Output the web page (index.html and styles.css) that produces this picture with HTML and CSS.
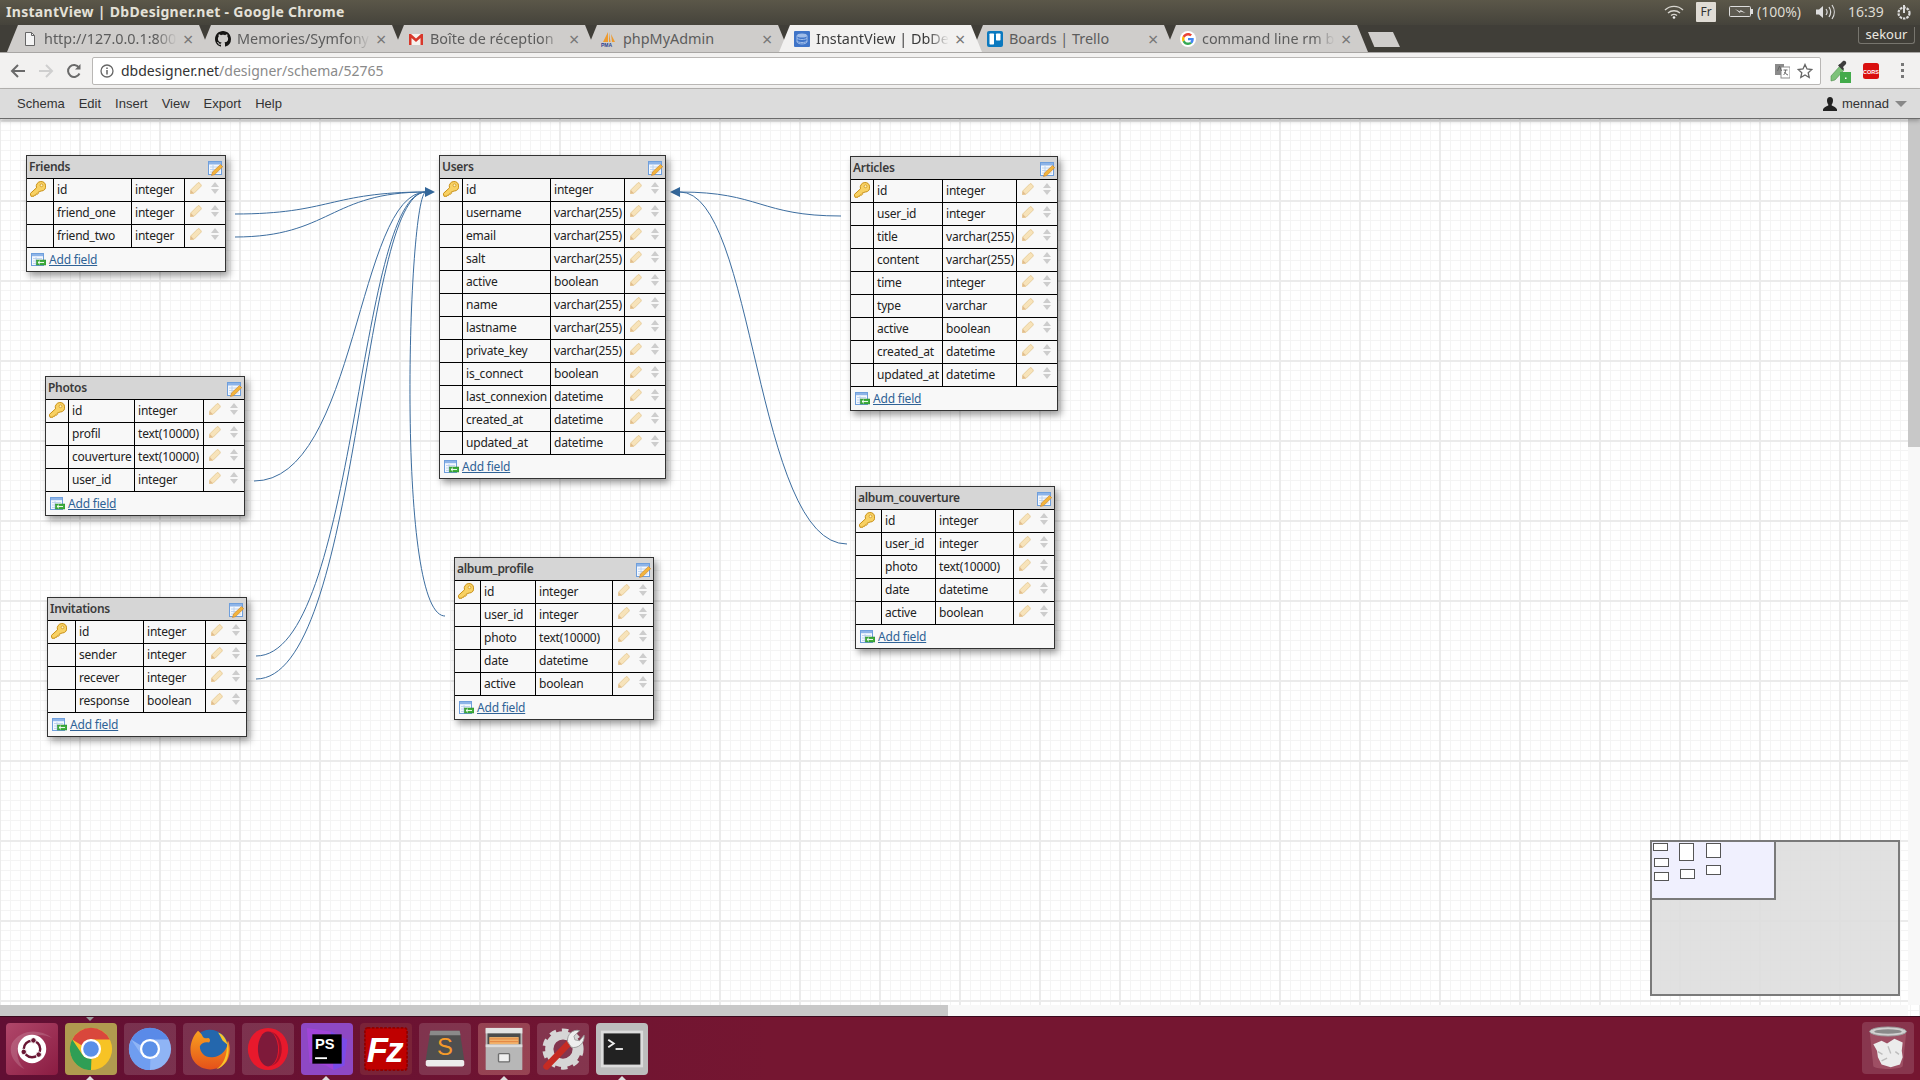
FILE: index.html
```html
<!DOCTYPE html>
<html>
<head>
  <title>InstantView | DbDesigner.net</title>
  <link rel="stylesheet" href="styles.css">
</head>
<body>

  <svg class="sprite">
    <symbol id="key" viewBox="0 0 16 16">
      <path d="M10.8.5a4.8 4.8 0 0 1 1 9.500L11 9.800 9.800 10.800 9 10.300l-.8.9.4 1-1.300 1-.9-.4-.6 1.400-1.400.1-.4.9-3 .1-.7-2.800 6.200-5.700A4.800 4.800 0 0 1 10.800.5z" fill="#f8d163" stroke="#c88f14"/>
      <circle cx="11.500" cy="4.300" r="1.400" fill="#fff3c4" stroke="#c88f14" stroke-width=".7"/>
    </symbol>
    <symbol id="pencil" viewBox="0 0 12 12">
      <path d="M.7 8 8 .7c1-.6 3.500 1.800 3.300 3.300L4 11.300.3 11.700z" fill="#f7e3ba" stroke="#e4c68f" stroke-width=".8"/>
      <path d="M1 8.300 3.700 11 .4 11.600z" fill="#e2bc8d"/>
    </symbol>
    <symbol id="sort" viewBox="0 0 8 12">
      <path d="M4 0 8 5H0zM4 12 0 7h8z" fill="#cdcdcd"/>
    </symbol>
    <symbol id="edit-table" viewBox="0 0 15 15">
      <rect x=".5" y=".5" width="13" height="13" fill="#f4f8fe" stroke="#6f9fdc"/>
      <rect x="1" y="1" width="12" height="2.500" fill="#8db4e8"/>
      <path d="M2 6h10M2 8.500h10M2 11h10M5 4v9" stroke="#b5cdec" stroke-width=".8"/>
      <path d="M4.500 11 12.500 3.500l2.200 2.200-8 7.800-3.200 1z" fill="#f3b43c" stroke="#c9822a" stroke-width=".6"/>
    </symbol>
    <symbol id="add-table" viewBox="0 0 15 13">
      <rect x=".5" y=".5" width="12" height="12" fill="#f4f8fe" stroke="#6f9fdc"/>
      <rect x="1" y="1" width="11" height="2.200" fill="#8db4e8"/>
      <path d="M2 5.500h9M2 8h9M2 10.500h9M5 4v8" stroke="#b5cdec" stroke-width=".8"/>
      <rect x="5.500" y="7" width="9.500" height="5" fill="#3fae3c" stroke="#23802a" stroke-width=".5"/>
      <path d="M7 9.500h6M7 9.500l2-1.800M7 9.500l2 1.800" stroke="#fff" stroke-width=".9" fill="none"/>
    </symbol>
    <linearGradient id="fox" x1="0" y1="0" x2="0" y2="1">
      <stop offset="0" stop-color="#f9a11f"/>
      <stop offset="1" stop-color="#e5511a"/>
    </linearGradient>
  </svg>

  <header class="panel">
    <div class="window-title">InstantView | DbDesigner.net - Google Chrome</div>
    <div class="indicators">
      <svg class="wifi" viewBox="0 0 20 14"><path d="M1 5a13 13 0 0 1 18 0M4 8a9 9 0 0 1 12 0M7 10.500a5 5 0 0 1 6 0" fill="none" stroke="#d8d6d0" stroke-width="1.400"/><circle cx="10" cy="12.500" r="1.300" fill="#eee"/></svg>
      <span class="lang">Fr</span>
      <svg class="battery" viewBox="0 0 24 11"><rect x=".5" y=".5" width="21" height="10" rx="1" fill="#5d5a50" stroke="#ddd"/><rect x="22" y="3" width="2" height="5" fill="#ddd"/><path d="M6 3l5 2.500.5-1.500 5 3-5-1.500-.5 1.500z" fill="#eee"/></svg>
      <span class="percent">(100%)</span>
      <svg class="volume" viewBox="0 0 20 16"><path d="M1 5.500h3L8 2v12L4 10.500H1z" fill="#ddd"/><path d="M11 5a5 5 0 0 1 0 6M14 3a9 9 0 0 1 0 10M17 1a12 12 0 0 1 0 14" fill="none" stroke="#ddd" stroke-width="1.200"/></svg>
      <span class="clock">16:39</span>
      <svg class="power" viewBox="0 0 18 18"><circle cx="9" cy="10" r="5.500" fill="none" stroke="#ddd" stroke-width="2.200" stroke-dasharray="2.500 1"/><path d="M9 2v8" stroke="#ddd" stroke-width="2"/></svg>
    </div>
  </header>

  <nav class="tabstrip">
    <div class="tab">
      <svg class="favicon" viewBox="0 0 16 16"><path d="M3.500 1.500h6l3 3v10h-9z" fill="#f4f4f4" stroke="#666"/><path d="M9.500 1.500v3h3" fill="none" stroke="#666"/></svg>
      <span class="tab-text">http://127.0.0.1:800</span><span class="close">×</span>
    </div>
    <div class="tab">
      <svg class="favicon" viewBox="0 0 16 16"><path fill="#161514" d="M8 0C3.580 0 0 3.580 0 8c0 3.540 2.290 6.530 5.470 7.590.4.070.55-.17.55-.38 0-.19-.01-.82-.01-1.490-2.010.37-2.530-.49-2.690-.94-.09-.23-.48-.94-.82-1.130-.28-.15-.68-.52-.01-.53.63-.01 1.080.58 1.230.82.72 1.210 1.870.87 2.330.66.07-.52.28-.87.51-1.070-1.780-.2-3.640-.89-3.640-3.950 0-.87.31-1.590.82-2.150-.08-.2-.36-1.020.08-2.120 0 0 .67-.21 2.200.82.64-.18 1.320-.27 2-.27.68 0 1.360.09 2 .27 1.530-1.040 2.200-.82 2.200-.82.44 1.100.16 1.920.08 2.120.51.56.82 1.270.82 2.150 0 3.070-1.870 3.750-3.650 3.950.29.25.54.73.54 1.480 0 1.070-.01 1.930-.01 2.200 0 .21.15.46.55.38A8.013 8.013 0 0 0 16 8c0-4.420-3.580-8-8-8z"/></svg>
      <span class="tab-text">Memories/Symfony</span><span class="close">×</span>
    </div>
    <div class="tab">
      <svg class="favicon" viewBox="0 0 16 16"><path d="M1 3h14v11H1z" fill="#f6f2ee"/><path d="M1 3h2l5 4.500L13 3h2v11h-2.500V7L8 11 3.500 7v7H1z" fill="#d8382b"/></svg>
      <span class="tab-text">Boîte de réception</span><span class="close">×</span>
    </div>
    <div class="tab">
      <svg class="favicon" viewBox="0 0 16 16"><path d="M2 11 7 1v10zM8 1l1.500 10H8zM10 3l4 8h-3z" fill="#ee9b2e"/><text x="0" y="15.500" class="pma">PMA</text></svg>
      <span class="tab-text plain">phpMyAdmin</span><span class="close">×</span>
    </div>
    <div class="tab active">
      <svg class="favicon" viewBox="0 0 16 16"><rect width="16" height="16" rx="1" fill="#3f74c8"/><ellipse cx="8" cy="4.500" rx="5" ry="2" fill="#9fbce8"/><path d="M3 7c1 2 9 2 10 0M3 10c1 2 9 2 10 0M3 4.500V11c1 2.600 9 2.600 10 0V4.500" fill="none" stroke="#9fbce8"/></svg>
      <span class="tab-text">InstantView | DbDe</span><span class="close">×</span>
    </div>
    <div class="tab">
      <svg class="favicon" viewBox="0 0 16 16"><rect width="16" height="16" rx="2" fill="#0b79bf"/><rect x="2.500" y="2.500" width="4.500" height="11" rx=".7" fill="#fff"/><rect x="9" y="2.500" width="4.500" height="7" rx=".7" fill="#fff"/></svg>
      <span class="tab-text plain">Boards | Trello</span><span class="close">×</span>
    </div>
    <div class="tab">
      <svg class="favicon" viewBox="0 0 48 48"><circle cx="24" cy="24" r="24" fill="#fff"/><g transform="translate(6 6) scale(.75)"><path fill="#EA4335" d="M24 9.500c3.540 0 6.710 1.220 9.210 3.600l6.850-6.850C35.900 2.380 30.470 0 24 0 14.620 0 6.510 5.380 2.560 13.220l7.980 6.190C12.430 13.720 17.740 9.500 24 9.500z"/><path fill="#4285F4" d="M46.980 24.550c0-1.570-.15-3.090-.38-4.550H24v9.020h12.940c-.58 2.960-2.260 5.480-4.780 7.180l7.730 6c4.510-4.180 7.090-10.360 7.090-17.650z"/><path fill="#FBBC05" d="M10.530 28.590c-.48-1.450-.76-2.990-.76-4.590s.27-3.140.76-4.590l-7.980-6.190C.92 16.460 0 20.120 0 24c0 3.880.92 7.540 2.560 10.780l7.970-6.190z"/><path fill="#34A853" d="M24 48c6.480 0 11.930-2.130 15.890-5.810l-7.730-6c-2.150 1.450-4.920 2.300-8.160 2.300-6.260 0-11.570-4.220-13.470-9.910l-7.980 6.190C6.510 42.620 14.620 48 24 48z"/></g></svg>
      <span class="tab-text">command line rm b</span><span class="close">×</span>
    </div>
    <div class="new-tab"></div>
    <div class="profile">sekour</div>
  </nav>

  <div class="toolbar">
    <svg class="nav-btn" viewBox="0 0 16 16"><path d="M15 8H2M8 2 2 8l6 6" fill="none" stroke="#6a6a6a" stroke-width="2"/></svg>
    <svg class="nav-btn" viewBox="0 0 16 16"><path d="M1 8h13M8 2l6 6-6 6" fill="none" stroke="#cfcfcf" stroke-width="2"/></svg>
    <svg class="nav-btn" viewBox="0 0 16 16"><path d="M13.500 10.500A6 6 0 1 1 13 4.500" fill="none" stroke="#6a6a6a" stroke-width="2"/><path d="M14.500 1v5.500H9z" fill="#6a6a6a"/></svg>
    <div class="omnibox">
      <svg class="info" viewBox="0 0 14 14"><circle cx="7" cy="7" r="6" fill="none" stroke="#666" stroke-width="1.300"/><path d="M7 6v4.500M7 3.500v1.400" stroke="#666" stroke-width="1.500"/></svg>
      <span class="host">dbdesigner.net</span><span class="path">/designer/schema/52765</span>
      <svg class="omni-icon" viewBox="0 0 15 16"><rect y="1" width="9" height="11" fill="#8b8b8b"/><rect x="6" y="4" width="9" height="11" fill="#fff" stroke="#8b8b8b"/><path d="M2.500 8 4.500 3 6.500 8M8.500 7h4M10.500 7c0 3-1 4-2 5M9.500 9c1 1.500 2 2.500 3.500 3" fill="none" stroke="#666"/></svg>
      <svg class="omni-icon star" viewBox="0 0 16 16"><path d="M8 1.500 10 6l4.800.5-3.600 3.200 1 4.800L8 12l-4.200 2.500 1-4.800L1.200 6.500 6 6z" fill="none" stroke="#666" stroke-width="1.300"/></svg>
    </div>
    <svg class="dropper" viewBox="0 0 22 24"><path d="M1 17 10 7l4 4-9 10-4 1z" fill="#7ec27a" stroke="#4c8a4a" stroke-width=".6"/><path d="M10 5l3-3c2-1 4 1 3 3l-3 3 1 2-1.500 1L8 6.500 9.500 5z" fill="#3d3d3d"/><rect x="10" y="13" width="11" height="11" fill="#43ab4b"/><rect x="15" y="18.500" width="1.500" height="1.500" fill="#fff"/></svg>
    <svg class="cors" viewBox="0 0 16 16"><rect width="16" height="16" rx="2.500" fill="#d9100f"/><text x="8" y="10.500" class="cors-text">CORS</text></svg>
    <div class="menu-dots"><i></i><i></i><i></i></div>
  </div>

  <div class="menubar">
    <span>Schema</span><span>Edit</span><span>Insert</span><span>View</span><span>Export</span><span>Help</span>
    <div class="user">
      <svg class="user-icon" viewBox="0 0 14 14"><path d="M7 0c2 0 3 1.500 3 3.500S9 7 8.500 8c0 1 4.500 1.500 5.500 4.500V14H0v-1.500C1 9.500 5.500 9 5.500 8 5 7 4 5.500 4 3.500S5 0 7 0z" fill="#222"/></svg>
      <span>mennad</span><i class="caret"></i>
    </div>
  </div>

  <main class="canvas">

    <svg class="links" viewBox="0 119 1920 886">
      <path d="M235 214C330 214 330 192 426 192"/>
      <path d="M235 237C330 237 330 192 426 192"/>
      <path d="M254 481C357 481 357 192 426 192"/>
      <path d="M256 656C357 656 357 192 426 192"/>
      <path d="M256 679C360 679 360 192 426 192"/>
      <path d="M445 616C395 616 408 192 426 192"/>
      <path class="arrow" d="M435 192 425 187V197Z"/>
      <path d="M841 216C760 216 760 192 680 192"/>
      <path d="M847 544C755 544 755 192 680 192"/>
      <path class="arrow" d="M670 192 680 187V197Z"/>
    </svg>

    <section class="tbl friends">
      <h3>Friends<svg class="edit-icon"><use href="#edit-table"/></svg></h3>
      <table>
        <colgroup><col><col><col><col></colgroup>
        <tr><td><svg class="key"><use href="#key"/></svg></td><td>id</td><td>integer</td><td class="ops"><svg class="pencil"><use href="#pencil"/></svg><svg class="sort"><use href="#sort"/></svg></td></tr>
        <tr><td></td><td>friend_one</td><td>integer</td><td class="ops"><svg class="pencil"><use href="#pencil"/></svg><svg class="sort"><use href="#sort"/></svg></td></tr>
        <tr><td></td><td>friend_two</td><td>integer</td><td class="ops"><svg class="pencil"><use href="#pencil"/></svg><svg class="sort"><use href="#sort"/></svg></td></tr>
      </table>
      <div class="add-field"><svg class="add-icon"><use href="#add-table"/></svg><a>Add field</a></div>
    </section>

    <section class="tbl users">
      <h3>Users<svg class="edit-icon"><use href="#edit-table"/></svg></h3>
      <table>
        <colgroup><col><col><col><col></colgroup>
        <tr><td><svg class="key"><use href="#key"/></svg></td><td>id</td><td>integer</td><td class="ops"><svg class="pencil"><use href="#pencil"/></svg><svg class="sort"><use href="#sort"/></svg></td></tr>
        <tr><td></td><td>username</td><td>varchar(255)</td><td class="ops"><svg class="pencil"><use href="#pencil"/></svg><svg class="sort"><use href="#sort"/></svg></td></tr>
        <tr><td></td><td>email</td><td>varchar(255)</td><td class="ops"><svg class="pencil"><use href="#pencil"/></svg><svg class="sort"><use href="#sort"/></svg></td></tr>
        <tr><td></td><td>salt</td><td>varchar(255)</td><td class="ops"><svg class="pencil"><use href="#pencil"/></svg><svg class="sort"><use href="#sort"/></svg></td></tr>
        <tr><td></td><td>active</td><td>boolean</td><td class="ops"><svg class="pencil"><use href="#pencil"/></svg><svg class="sort"><use href="#sort"/></svg></td></tr>
        <tr><td></td><td>name</td><td>varchar(255)</td><td class="ops"><svg class="pencil"><use href="#pencil"/></svg><svg class="sort"><use href="#sort"/></svg></td></tr>
        <tr><td></td><td>lastname</td><td>varchar(255)</td><td class="ops"><svg class="pencil"><use href="#pencil"/></svg><svg class="sort"><use href="#sort"/></svg></td></tr>
        <tr><td></td><td>private_key</td><td>varchar(255)</td><td class="ops"><svg class="pencil"><use href="#pencil"/></svg><svg class="sort"><use href="#sort"/></svg></td></tr>
        <tr><td></td><td>is_connect</td><td>boolean</td><td class="ops"><svg class="pencil"><use href="#pencil"/></svg><svg class="sort"><use href="#sort"/></svg></td></tr>
        <tr><td></td><td>last_connexion</td><td>datetime</td><td class="ops"><svg class="pencil"><use href="#pencil"/></svg><svg class="sort"><use href="#sort"/></svg></td></tr>
        <tr><td></td><td>created_at</td><td>datetime</td><td class="ops"><svg class="pencil"><use href="#pencil"/></svg><svg class="sort"><use href="#sort"/></svg></td></tr>
        <tr><td></td><td>updated_at</td><td>datetime</td><td class="ops"><svg class="pencil"><use href="#pencil"/></svg><svg class="sort"><use href="#sort"/></svg></td></tr>
      </table>
      <div class="add-field"><svg class="add-icon"><use href="#add-table"/></svg><a>Add field</a></div>
    </section>

    <section class="tbl articles">
      <h3>Articles<svg class="edit-icon"><use href="#edit-table"/></svg></h3>
      <table>
        <colgroup><col><col><col><col></colgroup>
        <tr><td><svg class="key"><use href="#key"/></svg></td><td>id</td><td>integer</td><td class="ops"><svg class="pencil"><use href="#pencil"/></svg><svg class="sort"><use href="#sort"/></svg></td></tr>
        <tr><td></td><td>user_id</td><td>integer</td><td class="ops"><svg class="pencil"><use href="#pencil"/></svg><svg class="sort"><use href="#sort"/></svg></td></tr>
        <tr><td></td><td>title</td><td>varchar(255)</td><td class="ops"><svg class="pencil"><use href="#pencil"/></svg><svg class="sort"><use href="#sort"/></svg></td></tr>
        <tr><td></td><td>content</td><td>varchar(255)</td><td class="ops"><svg class="pencil"><use href="#pencil"/></svg><svg class="sort"><use href="#sort"/></svg></td></tr>
        <tr><td></td><td>time</td><td>integer</td><td class="ops"><svg class="pencil"><use href="#pencil"/></svg><svg class="sort"><use href="#sort"/></svg></td></tr>
        <tr><td></td><td>type</td><td>varchar</td><td class="ops"><svg class="pencil"><use href="#pencil"/></svg><svg class="sort"><use href="#sort"/></svg></td></tr>
        <tr><td></td><td>active</td><td>boolean</td><td class="ops"><svg class="pencil"><use href="#pencil"/></svg><svg class="sort"><use href="#sort"/></svg></td></tr>
        <tr><td></td><td>created_at</td><td>datetime</td><td class="ops"><svg class="pencil"><use href="#pencil"/></svg><svg class="sort"><use href="#sort"/></svg></td></tr>
        <tr><td></td><td>updated_at</td><td>datetime</td><td class="ops"><svg class="pencil"><use href="#pencil"/></svg><svg class="sort"><use href="#sort"/></svg></td></tr>
      </table>
      <div class="add-field"><svg class="add-icon"><use href="#add-table"/></svg><a>Add field</a></div>
    </section>

    <section class="tbl photos">
      <h3>Photos<svg class="edit-icon"><use href="#edit-table"/></svg></h3>
      <table>
        <colgroup><col><col><col><col></colgroup>
        <tr><td><svg class="key"><use href="#key"/></svg></td><td>id</td><td>integer</td><td class="ops"><svg class="pencil"><use href="#pencil"/></svg><svg class="sort"><use href="#sort"/></svg></td></tr>
        <tr><td></td><td>profil</td><td>text(10000)</td><td class="ops"><svg class="pencil"><use href="#pencil"/></svg><svg class="sort"><use href="#sort"/></svg></td></tr>
        <tr><td></td><td>couverture</td><td>text(10000)</td><td class="ops"><svg class="pencil"><use href="#pencil"/></svg><svg class="sort"><use href="#sort"/></svg></td></tr>
        <tr><td></td><td>user_id</td><td>integer</td><td class="ops"><svg class="pencil"><use href="#pencil"/></svg><svg class="sort"><use href="#sort"/></svg></td></tr>
      </table>
      <div class="add-field"><svg class="add-icon"><use href="#add-table"/></svg><a>Add field</a></div>
    </section>

    <section class="tbl couverture">
      <h3>album_couverture<svg class="edit-icon"><use href="#edit-table"/></svg></h3>
      <table>
        <colgroup><col><col><col><col></colgroup>
        <tr><td><svg class="key"><use href="#key"/></svg></td><td>id</td><td>integer</td><td class="ops"><svg class="pencil"><use href="#pencil"/></svg><svg class="sort"><use href="#sort"/></svg></td></tr>
        <tr><td></td><td>user_id</td><td>integer</td><td class="ops"><svg class="pencil"><use href="#pencil"/></svg><svg class="sort"><use href="#sort"/></svg></td></tr>
        <tr><td></td><td>photo</td><td>text(10000)</td><td class="ops"><svg class="pencil"><use href="#pencil"/></svg><svg class="sort"><use href="#sort"/></svg></td></tr>
        <tr><td></td><td>date</td><td>datetime</td><td class="ops"><svg class="pencil"><use href="#pencil"/></svg><svg class="sort"><use href="#sort"/></svg></td></tr>
        <tr><td></td><td>active</td><td>boolean</td><td class="ops"><svg class="pencil"><use href="#pencil"/></svg><svg class="sort"><use href="#sort"/></svg></td></tr>
      </table>
      <div class="add-field"><svg class="add-icon"><use href="#add-table"/></svg><a>Add field</a></div>
    </section>

    <section class="tbl profile-tbl">
      <h3>album_profile<svg class="edit-icon"><use href="#edit-table"/></svg></h3>
      <table>
        <colgroup><col><col><col><col></colgroup>
        <tr><td><svg class="key"><use href="#key"/></svg></td><td>id</td><td>integer</td><td class="ops"><svg class="pencil"><use href="#pencil"/></svg><svg class="sort"><use href="#sort"/></svg></td></tr>
        <tr><td></td><td>user_id</td><td>integer</td><td class="ops"><svg class="pencil"><use href="#pencil"/></svg><svg class="sort"><use href="#sort"/></svg></td></tr>
        <tr><td></td><td>photo</td><td>text(10000)</td><td class="ops"><svg class="pencil"><use href="#pencil"/></svg><svg class="sort"><use href="#sort"/></svg></td></tr>
        <tr><td></td><td>date</td><td>datetime</td><td class="ops"><svg class="pencil"><use href="#pencil"/></svg><svg class="sort"><use href="#sort"/></svg></td></tr>
        <tr><td></td><td>active</td><td>boolean</td><td class="ops"><svg class="pencil"><use href="#pencil"/></svg><svg class="sort"><use href="#sort"/></svg></td></tr>
      </table>
      <div class="add-field"><svg class="add-icon"><use href="#add-table"/></svg><a>Add field</a></div>
    </section>

    <section class="tbl invitations">
      <h3>Invitations<svg class="edit-icon"><use href="#edit-table"/></svg></h3>
      <table>
        <colgroup><col><col><col><col></colgroup>
        <tr><td><svg class="key"><use href="#key"/></svg></td><td>id</td><td>integer</td><td class="ops"><svg class="pencil"><use href="#pencil"/></svg><svg class="sort"><use href="#sort"/></svg></td></tr>
        <tr><td></td><td>sender</td><td>integer</td><td class="ops"><svg class="pencil"><use href="#pencil"/></svg><svg class="sort"><use href="#sort"/></svg></td></tr>
        <tr><td></td><td>recever</td><td>integer</td><td class="ops"><svg class="pencil"><use href="#pencil"/></svg><svg class="sort"><use href="#sort"/></svg></td></tr>
        <tr><td></td><td>response</td><td>boolean</td><td class="ops"><svg class="pencil"><use href="#pencil"/></svg><svg class="sort"><use href="#sort"/></svg></td></tr>
      </table>
      <div class="add-field"><svg class="add-icon"><use href="#add-table"/></svg><a>Add field</a></div>
    </section>

    <!-- minimap -->
    <div class="minimap">
      <div class="viewport"></div>
      <i class="mini m1"></i><i class="mini m2"></i><i class="mini m3"></i><i class="mini m4"></i><i class="mini m5"></i><i class="mini m6"></i><i class="mini m7"></i>
    </div>

    <div class="vscroll"><div class="vthumb"></div></div>
    <div class="hscroll"><div class="hthumb"></div></div>
  </main>

  <footer class="dock">
    <div class="tile t-ubuntu">
      <svg viewBox="0 0 48 48"><path d="M2 18C10 4 30 0 46 12 34 6 18 8 10 20 6 28 8 38 16 46 4 40-2 28 2 18z" fill="#fff" opacity=".16"/><circle cx="24" cy="24" r="15.500" fill="#fff"/><circle cx="24" cy="24" r="9" fill="none" stroke="#6a1634" stroke-width="2.600"/><circle cx="25.600" cy="14.600" r="3" fill="#6a1634" stroke="#fff"/><circle cx="31.300" cy="30.100" r="3" fill="#6a1634" stroke="#fff"/><circle cx="15" cy="27.200" r="3" fill="#6a1634" stroke="#fff"/></svg>
    </div>
    <div class="tile t-chrome">
      <svg viewBox="0 0 48 48"><circle cx="24" cy="24" r="23" fill="#f7c325"/><path d="M3.500 13.500A23 23 0 0 1 44.500 13.500H24a10 10 0 0 0-9.500 7z" fill="#d9473c"/><path d="M3.500 13.500 14.500 30a10 10 0 0 0 10 4L24 47A23 23 0 0 1 3.500 13.500z" fill="#2f9e55"/><circle cx="24" cy="24" r="11" fill="#fff"/><circle cx="24" cy="24" r="8.500" fill="#5a8fe8"/></svg>
    </div>
    <div class="tile">
      <svg viewBox="0 0 48 48"><circle cx="24" cy="24" r="23" fill="#8fb4f5"/><path d="M3.500 13.500A23 23 0 0 1 44.500 13.500H24a10 10 0 0 0-9.500 7z" fill="#5a8ae8"/><path d="M3.500 13.500 14.500 30a10 10 0 0 0 10 4L24 47A23 23 0 0 1 3.500 13.500z" fill="#6f9df0"/><circle cx="24" cy="24" r="11" fill="#fff"/><circle cx="24" cy="24" r="8.500" fill="#5a8fe8"/></svg>
    </div>
    <div class="tile">
      <svg viewBox="0 0 48 48"><circle cx="25" cy="23" r="20" fill="#2467ad"/><path d="M34 6c5 2 9 7 10 13l-5-4z" fill="#f7c32a"/><path d="M12 4C3 13 1 29 8 38c8 11 27 11 35 0 4-6 5-15 2-23-1 10-7 17-17 18-8 1-14-5-14-12 2-4 6-5 10-4 2-2 1-5-1-5-3 1-5 0-6-2-1-3-3-4-5-6z" fill="url(#fox)"/><path d="M44 15c2 7 2 15-1 22-3 5-7 8-11 9 8-5 12-14 12-31z" fill="#f7c32a"/></svg>
    </div>
    <div class="tile">
      <svg viewBox="0 0 48 48"><ellipse cx="24" cy="24" rx="22" ry="23" fill="#e8192c"/><ellipse cx="24" cy="24" rx="11" ry="19" fill="#7e1a3a"/><path d="M24 5c7 0 12 8 12 19s-5 19-12 19c9 0 15-8 15-19S33 5 24 5z" fill="#a8122a"/></svg>
    </div>
    <div class="tile t-storm">
      <svg viewBox="0 0 48 48"><path d="M2 1 28 5l18 9-3 28-12 5-8-5-18-3z" fill="#a044d8"/><path d="M28 5l18 9-3 28-12 5z" fill="#7a4be8"/><rect x="8" y="8" width="32" height="32" fill="#000"/><text x="11" y="24" class="ps-text">PS</text><rect x="11" y="33" width="13" height="2" fill="#fff"/></svg>
    </div>
    <div class="tile t-zilla">
      <svg viewBox="0 0 48 48"><rect x="1" y="1" width="46" height="46" rx="3" fill="#bf0000" stroke="#8f0000" stroke-width="2" stroke-dasharray="3 1.500"/><text x="3" y="38" class="fz-text">Fz</text></svg>
    </div>
    <div class="tile">
      <svg viewBox="0 0 48 48"><path d="M8 4h32l5 32H3z" fill="#4f4f4f"/><path d="M8 4h32l1 5H7z" fill="#8a8a8a"/><rect x="3" y="36" width="42" height="7" rx="2" fill="#ececec"/><text x="24" y="30" class="subl-text">S</text></svg>
    </div>
    <div class="tile t-files">
      <svg viewBox="0 0 48 48"><rect x="4" y="1" width="40" height="46" rx="1" fill="#b7b7b7"/><rect x="4" y="1" width="40" height="6" fill="#e3e3e3"/><rect x="6" y="7" width="36" height="12" fill="#4c4c4c"/><rect x="8" y="11" width="32" height="8" fill="#f2b26b"/><path d="M8 13h32M8 16h32" stroke="#e07f3b"/><rect x="4" y="19" width="40" height="3" fill="#dcdcdc"/><rect x="18" y="29" width="12" height="9" rx="1" fill="#efefef" stroke="#6e6e6e" stroke-width="1.500"/></svg>
    </div>
    <div class="tile">
      <svg viewBox="0 0 48 48"><circle cx="24" cy="24" r="15" fill="none" stroke="#d6d6d6" stroke-width="9"/><circle cx="24" cy="24" r="20" fill="none" stroke="#d6d6d6" stroke-width="5" stroke-dasharray="7 6.200"/><path d="M6 43 32 16" stroke="#c62b23" stroke-width="7" stroke-linecap="round"/><path d="M29 16c-1-8 6-14 13-12l-6 6 1 4 5 1 5-6c1 9-7 15-14 13z" fill="#eee" stroke="#999"/></svg>
    </div>
    <div class="tile t-term">
      <svg viewBox="0 0 48 48"><rect x="1" y="4" width="46" height="40" fill="#dcdcdc"/><rect x="4" y="7" width="40" height="34" fill="#222"/><path d="M9 14l6 4-6 4" fill="none" stroke="#eee" stroke-width="2"/><rect x="17" y="23" width="8" height="2" fill="#eee"/></svg>
    </div>
    <div class="tile t-trash">
      <svg viewBox="0 0 48 48"><path d="M4 6h40l-4 38c-4 4-28 4-32 0z" fill="#a85a6e" opacity=".7"/><ellipse cx="24" cy="6" rx="20" ry="5" fill="#d0d0d0" stroke="#9a9a9a"/><ellipse cx="24" cy="6" rx="15" ry="2.500" fill="#8a8a8a"/><path d="M8 20l9-4 6 3 8-5 9 4-1 9 1 7-3 8-10 3-10-3-4-8-1-7z" fill="#ececec"/><path d="M13 28l5 3M24 22l3 8M32 28l4 3M17 38l6-3" stroke="#bdbdbd" stroke-width="1.500"/></svg>
    </div>
    <i class="pip pip-top chrome-top"></i>
    <i class="pip chrome-pip"></i>
    <i class="pip storm-pip"></i>
    <i class="pip files-pip"></i>
    <i class="pip term-pip"></i>
  </footer>

</body>
</html>
```

FILE: styles.css
```css
* {
  box-sizing: border-box;
}

html,
body {
  margin: 0;
  height: 100%;
  overflow: hidden;
}

body {
  display: flex;
  flex-direction: column;
  width: 1920px;
  height: 1080px;
  font-family: "Noto Sans", sans-serif;
  background-color: #ffffff;
}

.sprite {
  position: absolute;
  width: 0;
  height: 0;
}

/* desktop panel */

.panel {
  height: 25px;
  flex: none;
  display: flex;
  align-items: center;
  justify-content: space-between;
  background: linear-gradient(#5b5749, #45433b);
  color: #e4e1d8;
  padding: 0 0 2px 6px;
}

.window-title {
  font-size: 14px;
  font-weight: 700;
  letter-spacing: .3px;
}

.indicators {
  display: flex;
  align-items: center;
  height: 23px;
  font-size: 14px;
  color: #dedbd2;
}

.wifi {
  width: 20px;
  height: 14px;
}

.lang {
  width: 20px;
  height: 20px;
  margin-left: 12px;
  border-radius: 1px;
  background-color: #e0dcd5;
  color: #333333;
  font-size: 12px;
  line-height: 20px;
  text-align: center;
}

.battery {
  width: 24px;
  height: 11px;
  margin-left: 13px;
}

.percent {
  width: 50px;
  margin-left: 4px;
}

.volume {
  width: 20px;
  height: 16px;
  margin-left: 8px;
}

.clock {
  width: 36px;
  margin-left: 13px;
  white-space: nowrap;
}

.power {
  width: 18px;
  height: 18px;
  margin-left: 11px;
  margin-right: 7px;
}

/* chrome tabs */

.tabstrip {
  position: relative;
  height: 27px;
  flex: none;
  display: flex;
  padding-left: 7px;
  background-color: #403e38;
}

.tab {
  position: relative;
  flex: none;
  width: 203px;
  margin-right: -10px;
  display: flex;
  align-items: center;
  padding-left: 15px;
  background-color: #cfcdcb;
  color: #5c5c5c;
  font-size: 14.4px;
  clip-path: polygon(0 100%, 11px 0, calc(100% - 11px) 0, 100% 100%);
}

.tab.active {
  z-index: 2;
  background-color: #f2f1f0;
  color: #3a3a3a;
}

.favicon {
  flex: none;
  width: 16px;
  height: 16px;
}

.pma {
  font-size: 5px;
  font-weight: 700;
  fill: #2c3f8f;
  font-family: "Liberation Sans", sans-serif;
}

.tab-text {
  width: 133px;
  margin-left: 6px;
  white-space: nowrap;
  overflow: hidden;
  -webkit-mask-image: linear-gradient(to right, #000 84%, transparent 100%);
  mask-image: linear-gradient(to right, #000 84%, transparent 100%);
}

.tab-text.plain {
  -webkit-mask-image: none;
  mask-image: none;
}

.close {
  margin-left: 6px;
  color: #777777;
  font-size: 18px;
  line-height: 18px;
}

.new-tab {
  width: 32px;
  height: 15px;
  flex: none;
  margin: 7px 0 0 10px;
  background-color: #cfcdcb;
  clip-path: polygon(0 0, 78% 0, 100% 100%, 20% 100%);
}

.profile {
  position: absolute;
  top: 2px;
  right: 5px;
  width: 57px;
  height: 17px;
  border: 1px solid #77756e;
  border-top: none;
  border-radius: 0 0 3px 3px;
  color: #ece9e2;
  font-size: 13px;
  line-height: 15px;
  text-align: center;
}

/* chrome toolbar */

.toolbar {
  height: 37px;
  flex: none;
  display: flex;
  align-items: center;
  padding-left: 10px;
  background-color: #f2f1f0;
  border-top: 1px solid #a8a6a4;
  border-bottom: 1px solid #b5b3b1;
}

.nav-btn {
  width: 16px;
  height: 16px;
  margin-right: 12px;
}

.omnibox {
  width: 1729px;
  height: 28px;
  margin-left: -2px;
  display: flex;
  align-items: center;
  padding: 0 7px;
  background-color: #ffffff;
  border: 1px solid #b9b7b5;
  border-radius: 2px;
  font-size: 14px;
}

.info {
  width: 14px;
  height: 14px;
  margin-right: 7px;
}

.host {
  color: #333333;
}

.path {
  color: #8a8a8a;
}

.omni-icon {
  width: 15px;
  height: 16px;
  margin-left: auto;
  margin-right: 7px;
}

.omni-icon.star {
  width: 16px;
  margin-left: 0;
  margin-right: 0;
}

.dropper {
  width: 22px;
  height: 24px;
  margin-left: 9px;
}

.cors {
  width: 16px;
  height: 16px;
  margin-left: 11px;
}

.cors-text {
  font-family: "Liberation Sans", sans-serif;
  font-size: 5.5px;
  font-weight: 700;
  fill: #ffffff;
  text-anchor: middle;
}

.menu-dots {
  display: flex;
  flex-direction: column;
  gap: 3px;
  margin-left: 22px;
}

.menu-dots i {
  width: 3px;
  height: 3px;
  background-color: #777777;
}

/* dbdesigner menu */

.menubar {
  position: relative;
  z-index: 3;
  height: 30px;
  flex: none;
  display: flex;
  align-items: center;
  gap: 14px;
  padding-left: 17px;
  background-color: #dcdcdc;
  border-bottom: 1px solid #6b6b6b;
  box-shadow: 0 2px 4px rgba(0, 0, 0, .25);
  font-family: "Liberation Sans", sans-serif;
  font-size: 13px;
  color: #333333;
}

.user {
  display: flex;
  align-items: center;
  margin-left: auto;
  padding-right: 13px;
  gap: 5px;
}

.user-icon {
  width: 14px;
  height: 14px;
}

.caret {
  width: 0;
  height: 0;
  margin-left: 1px;
  border-left: 6px solid transparent;
  border-right: 6px solid transparent;
  border-top: 6px solid #888888;
}

/* schema canvas */

.canvas {
  position: relative;
  flex: 1;
  min-height: 0;
  overflow: hidden;
  background-color: #ffffff;
  background-image:
    linear-gradient(#ebebeb 2px, transparent 2px),
    linear-gradient(90deg, #ebebeb 2px, transparent 2px),
    linear-gradient(#f4f4f4 1px, transparent 1px),
    linear-gradient(90deg, #f4f4f4 1px, transparent 1px);
  background-size: 80px 80px, 80px 80px, 10px 10px, 10px 10px;
  background-position: 0 1px, -1px 0, 0 1px, 0 0;
}

.links {
  position: absolute;
  left: 0;
  top: 0;
  width: 1920px;
  height: 886px;
}

.links path {
  fill: none;
  stroke: #3c6d9f;
  stroke-width: 1;
}

.links .arrow {
  fill: #336699;
  stroke: none;
}

.tbl {
  position: absolute;
  border: 1px solid #333333;
  background-color: #f8f8f8;
  box-shadow: 3px 4px 7px rgba(0, 0, 0, .4);
  font-size: 12px;
  color: #222222;
}

.tbl h3 {
  position: relative;
  margin: 0;
  height: 23px;
  padding-left: 2px;
  background-color: #d6d6d6;
  border-bottom: 1px solid #000000;
  color: #3a3a3a;
  font-size: 12px;
  font-weight: 600;
  line-height: 21px;
  letter-spacing: -.3px;
}

.edit-icon {
  position: absolute;
  right: 2px;
  top: 5px;
  width: 15px;
  height: 15px;
}

.tbl table {
  width: 100%;
  table-layout: fixed;
  border-collapse: separate;
  border-spacing: 0;
}

.tbl td {
  height: 23px;
  padding: 0 0 2px 3px;
  border-right: 1px solid #000000;
  border-bottom: 1px solid #000000;
  letter-spacing: -.2px;
  white-space: nowrap;
  overflow: hidden;
}

.tbl td:last-child {
  border-right: none;
}

.tbl .ops {
  padding: 0;
  vertical-align: top;
}

.key {
  display: block;
  width: 16px;
  height: 16px;
}

.pencil {
  display: inline-block;
  width: 12px;
  height: 12px;
  margin: 3px 0 0 5px;
  vertical-align: top;
}

.sort {
  display: inline-block;
  width: 8px;
  height: 12px;
  margin: 3px 0 0 9px;
  vertical-align: top;
}

.add-field {
  display: flex;
  align-items: center;
  height: 23px;
  padding-left: 4px;
}

.add-icon {
  width: 15px;
  height: 13px;
  margin-right: 3px;
}

.add-field a {
  color: #2f6296;
  text-decoration: underline;
  letter-spacing: -.2px;
}

.friends {
  left: 26px;
  top: 36px;
  width: 200px;
}

.friends col:nth-child(1) { width: 27px; }
.friends col:nth-child(2) { width: 78px; }
.friends col:nth-child(3) { width: 53px; }

.users {
  left: 439px;
  top: 36px;
  width: 227px;
}

.users col:nth-child(1) { width: 23px; }
.users col:nth-child(2) { width: 88px; }
.users col:nth-child(3) { width: 74px; }

.articles {
  left: 850px;
  top: 37px;
  width: 208px;
}

.articles col:nth-child(1) { width: 23px; }
.articles col:nth-child(2) { width: 69px; }
.articles col:nth-child(3) { width: 74px; }

.photos {
  left: 45px;
  top: 257px;
  width: 200px;
}

.photos col:nth-child(1) { width: 23px; }
.photos col:nth-child(2) { width: 66px; }
.photos col:nth-child(3) { width: 69px; }

.couverture {
  left: 855px;
  top: 367px;
  width: 200px;
}

.couverture col:nth-child(1) { width: 26px; }
.couverture col:nth-child(2) { width: 54px; }
.couverture col:nth-child(3) { width: 78px; }

.profile-tbl {
  left: 454px;
  top: 438px;
  width: 200px;
}

.profile-tbl col:nth-child(1) { width: 26px; }
.profile-tbl col:nth-child(2) { width: 55px; }
.profile-tbl col:nth-child(3) { width: 77px; }

.invitations {
  left: 47px;
  top: 478px;
  width: 200px;
}

.invitations col:nth-child(1) { width: 28px; }
.invitations col:nth-child(2) { width: 68px; }
.invitations col:nth-child(3) { width: 62px; }

/* minimap */

.minimap {
  position: absolute;
  left: 1650px;
  top: 721px;
  width: 250px;
  height: 156px;
  border: 2px solid #7a7a7a;
  background-color: rgba(222, 222, 222, .9);
}

.viewport {
  position: absolute;
  left: -2px;
  top: -2px;
  width: 126px;
  height: 60px;
  border: 2px solid #7a7a7a;
  background-color: rgba(240, 240, 255, .95);
}

.mini {
  position: absolute;
  width: 15px;
  border: 1px solid #555555;
  background-color: #ffffff;
}

.m1 { left: 1px; top: 1px; height: 8px; }
.m2 { left: 2px; top: 16px; height: 9px; }
.m3 { left: 2px; top: 30px; height: 9px; }
.m4 { left: 27px; top: 1px; height: 18px; }
.m5 { left: 28px; top: 27px; height: 10px; }
.m6 { left: 54px; top: 1px; height: 15px; }
.m7 { left: 54px; top: 23px; height: 10px; }

/* page scrollbars */

.vscroll {
  position: absolute;
  right: 0;
  top: 0;
  width: 12px;
  height: 886px;
  background-color: #f8f8f8;
}

.vthumb {
  height: 328px;
  background-color: #c8c8c8;
}

.hscroll {
  position: absolute;
  left: 0;
  bottom: 0;
  width: 1908px;
  height: 11px;
  background-color: #f8f8f8;
}

.hthumb {
  width: 948px;
  height: 11px;
  background-color: #c8c8c8;
}

/* launcher */

.dock {
  position: relative;
  height: 64px;
  flex: none;
  display: flex;
  align-items: center;
  gap: 7px;
  padding: 0 6px;
  background: linear-gradient(90deg, #610f33, #751631 40%, #751631);
  border-top: 1px solid #3a0a1e;
}

.tile {
  width: 52px;
  height: 52px;
  flex: none;
  display: flex;
  align-items: center;
  justify-content: center;
  margin-top: 1px;
  border-radius: 4px;
  background-color: rgba(255, 255, 255, .14);
}

.tile svg {
  width: 44px;
  height: 44px;
}

.t-ubuntu {
  background: linear-gradient(135deg, #b0476a, #8a1c42);
}

.t-chrome {
  background-color: #b09a4f;
}

.t-storm {
  background-color: #8e48c4;
}

.t-zilla {
  background-color: #7a2338;
}

.t-files {
  background-color: rgba(255, 190, 170, .28);
}

.t-term {
  background-color: #bdbdbd;
}

.t-trash {
  position: absolute;
  left: 1862px;
  top: 5px;
  margin: 0;
}

.ps-text {
  font-family: "Liberation Sans", sans-serif;
  font-size: 16px;
  font-weight: 700;
  fill: #ffffff;
}

.fz-text {
  font-family: "Liberation Sans", sans-serif;
  font-size: 38px;
  font-weight: 700;
  font-style: italic;
  fill: #ffffff;
  letter-spacing: -2px;
}

.subl-text {
  font-family: "Liberation Sans", sans-serif;
  font-size: 26px;
  fill: #f59a2a;
  text-anchor: middle;
}

.pip {
  position: absolute;
  bottom: 0;
  width: 0;
  height: 0;
  border-left: 4px solid transparent;
  border-right: 4px solid transparent;
  border-bottom: 4px solid #dcdcdc;
}

.pip-top {
  bottom: auto;
  top: 0;
  border-bottom: none;
  border-top: 4px solid #999999;
}

.chrome-top { left: 86px; }
.chrome-pip { left: 86px; }
.storm-pip { left: 322px; }
.files-pip { left: 500px; }
.term-pip { left: 618px; }
```
